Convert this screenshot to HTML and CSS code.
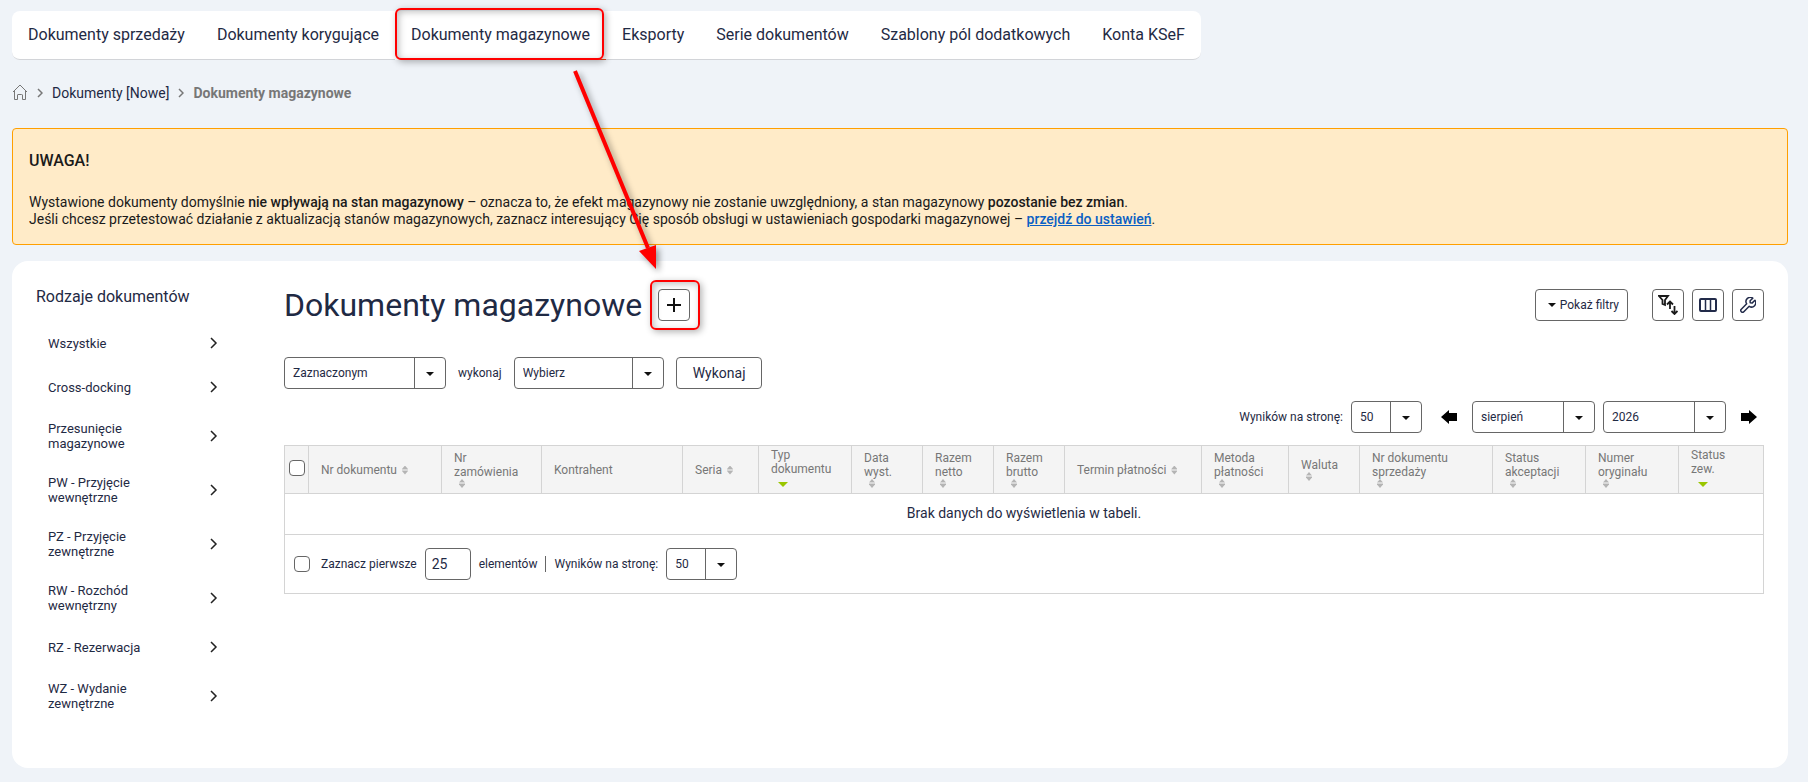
FILE: index.html
```html
<!DOCTYPE html>
<html lang="pl">

<head>
    <meta charset="utf-8">
    <meta name="viewport" content="width=device-width, initial-scale=1">
    <title>Dokumenty magazynowe</title>
    <link rel="stylesheet" href="styles.css">
</head>

<body>
    <nav class="tabs">
        <a href="#" class="tab">Dokumenty sprzedaży</a>
        <a href="#" class="tab">Dokumenty korygujące</a>
        <div class="tab-current">
            <a href="#" class="tab active">Dokumenty magazynowe</a>
            <svg class="pointer" width="100" height="210" viewBox="0 0 100 210">
                <path d="M10 2L83 179" stroke="#f00" stroke-width="4" fill="none" />
                <path d="M74 182L91 176L91 200Z" fill="#f00" />
            </svg>
        </div>
        <a href="#" class="tab">Eksporty</a>
        <a href="#" class="tab">Serie dokumentów</a>
        <a href="#" class="tab">Szablony pól dodatkowych</a>
        <a href="#" class="tab">Konta KSeF</a>
    </nav>

    <nav class="breadcrumb">
        <a href="#" class="home" aria-label="Strona główna">
            <svg width="16" height="18" viewBox="0 0 16 18">
                <path d="M1 8L8 1L15 8M2.5 7V15.5H5.5V11Q5.5 10.500 6 10.500H9.500Q10.500 10.500 10.500 11V15.500H13.500V7" />
            </svg>
        </a>
        <svg class="sep" width="6" height="10" viewBox="0 0 6 10"><path d="M1 1L5 5L1 9" /></svg>
        <a href="#">Dokumenty [Nowe]</a>
        <svg class="sep" width="6" height="10" viewBox="0 0 6 10"><path d="M1 1L5 5L1 9" /></svg>
        <span class="current">Dokumenty magazynowe</span>
    </nav>

    <div class="alert">
        <div class="alert-title">UWAGA!</div>
        <p>
            Wystawione dokumenty domyślnie <b>nie wpływają na stan magazynowy</b> – oznacza to, że efekt magazynowy nie zostanie uwzględniony, a stan magazynowy <b>pozostanie bez zmian</b>.<br>
            Jeśli chcesz przetestować działanie z aktualizacją stanów magazynowych, zaznacz interesujący Cię sposób obsługi w ustawieniach gospodarki magazynowej – <a href="#">przejdź do ustawień</a>.
        </p>
    </div>

    <div class="card">
        <aside class="sidebar">
            <div class="sidebar-title">Rodzaje dokumentów</div>
            <a href="#" class="type"><span>Wszystkie</span><svg width="8" height="12" viewBox="0 0 8 12"><path d="M1 1L6 6L1 11" /></svg></a>
            <a href="#" class="type"><span>Cross-docking</span><svg width="8" height="12" viewBox="0 0 8 12"><path d="M1 1L6 6L1 11" /></svg></a>
            <a href="#" class="type"><span>Przesunięcie magazynowe</span><svg width="8" height="12" viewBox="0 0 8 12"><path d="M1 1L6 6L1 11" /></svg></a>
            <a href="#" class="type"><span>PW - Przyjęcie wewnętrzne</span><svg width="8" height="12" viewBox="0 0 8 12"><path d="M1 1L6 6L1 11" /></svg></a>
            <a href="#" class="type"><span>PZ - Przyjęcie zewnętrzne</span><svg width="8" height="12" viewBox="0 0 8 12"><path d="M1 1L6 6L1 11" /></svg></a>
            <a href="#" class="type"><span>RW - Rozchód wewnętrzny</span><svg width="8" height="12" viewBox="0 0 8 12"><path d="M1 1L6 6L1 11" /></svg></a>
            <a href="#" class="type"><span>RZ - Rezerwacja</span><svg width="8" height="12" viewBox="0 0 8 12"><path d="M1 1L6 6L1 11" /></svg></a>
            <a href="#" class="type"><span>WZ - Wydanie zewnętrzne</span><svg width="8" height="12" viewBox="0 0 8 12"><path d="M1 1L6 6L1 11" /></svg></a>
        </aside>

        <main class="content">
            <div class="header">
                <h1>Dokumenty magazynowe</h1>
                <div class="marked">
                    <button type="button" class="btn icon" aria-label="Dodaj">
                        <svg width="14" height="14" viewBox="0 0 14 14"><path d="M7 0V14M0 7H14" stroke="#111" stroke-width="2" /></svg>
                    </button>
                </div>
                <div class="tools">
                    <button type="button" class="btn filter"><i class="caret"></i>Pokaż filtry</button>
                    <button type="button" class="btn icon" aria-label="Sortowanie">
                        <svg width="20" height="20" viewBox="0 0 20 20" fill="none" stroke="#1a1a1a">
                            <path d="M1 1H10L7 5V10L4.500 9V5Z" stroke-width="1.800" />
                            <path d="M12 14V7M9 9.500L12 6.500L15 9.500" stroke-width="1.800" />
                            <path d="M16.500 11V18.500M13.500 16L16.500 19L19.500 16" stroke-width="1.800" />
                        </svg>
                    </button>
                    <button type="button" class="btn icon" aria-label="Kolumny">
                        <svg width="18" height="14" viewBox="0 0 18 14" fill="none" stroke="#222b4a">
                            <rect x="1" y="1" width="16" height="12" rx="1" stroke-width="2" />
                            <path d="M6.500 1V13M11.500 1V13" stroke-width="1.500" />
                        </svg>
                    </button>
                    <button type="button" class="btn icon" aria-label="Ustawienia">
                        <svg width="16" height="16" viewBox="0 0 16 16" fill="none" stroke="#222b4a" stroke-width="1.500" stroke-linejoin="round">
                            <path d="M12.800 1.200A4.200 4.200 0 0 0 6.700 6.800L1.300 12.200A1.700 1.700 0 0 0 3.800 14.700L9.200 9.300A4.200 4.200 0 0 0 14.900 3.300L12.300 5.900L10.200 5.700L10.100 3.800Z" />
                        </svg>
                    </button>
                </div>
            </div>

            <div class="actions">
                <span class="select target"><select aria-label="Zakres"><option>Zaznaczonym</option></select></span>
                <label for="action">wykonaj</label>
                <span class="select action"><select id="action"><option>Wybierz</option></select></span>
                <button type="button" class="btn run">Wykonaj</button>
            </div>

            <div class="paging">
                <label for="per-page">Wyników na stronę:</label>
                <span class="select count"><select id="per-page"><option>50</option></select></span>
                <button type="button" class="step prev" aria-label="Poprzedni miesiąc">
                    <svg width="16" height="14" viewBox="0 0 16 14"><path d="M0 7L8 0V3H16V11H8V14Z" /></svg>
                </button>
                <span class="select period"><select aria-label="Miesiąc"><option>sierpień</option></select></span>
                <span class="select period"><select aria-label="Rok"><option>2026</option></select></span>
                <button type="button" class="step next" aria-label="Następny miesiąc">
                    <svg width="16" height="14" viewBox="0 0 16 14"><path d="M16 7L8 0V3H0V11H8V14Z" /></svg>
                </button>
            </div>

            <table class="list">
                <colgroup>
                    <col class="w-check">
                    <col class="w-number">
                    <col class="w-order">
                    <col>
                    <col class="w-series">
                    <col class="w-type">
                    <col class="w-small">
                    <col class="w-small">
                    <col class="w-small">
                    <col class="w-term">
                    <col class="w-method">
                    <col class="w-small">
                    <col class="w-number">
                    <col class="w-type">
                    <col class="w-type">
                    <col class="w-ext">
                </colgroup>
                <thead>
                    <tr>
                        <th class="check"><input type="checkbox" aria-label="Zaznacz wszystkie"></th>
                        <th>Nr dokumentu<i class="sort inline"></i></th>
                        <th>Nr zamówienia<i class="sort"></i></th>
                        <th>Kontrahent</th>
                        <th>Seria<i class="sort inline"></i></th>
                        <th>Typ dokumentu<i class="sorted"></i></th>
                        <th>Data wyst.<i class="sort"></i></th>
                        <th>Razem netto<i class="sort"></i></th>
                        <th>Razem brutto<i class="sort"></i></th>
                        <th>Termin płatności<i class="sort inline"></i></th>
                        <th>Metoda płatności<i class="sort"></i></th>
                        <th>Waluta<i class="sort"></i></th>
                        <th>Nr dokumentu sprzedaży<i class="sort"></i></th>
                        <th>Status akceptacji<i class="sort"></i></th>
                        <th>Numer oryginału<i class="sort"></i></th>
                        <th>Status<br>zew.<i class="sorted"></i></th>
                    </tr>
                </thead>
                <tbody>
                    <tr>
                        <td class="empty" colspan="16">Brak danych do wyświetlenia w tabeli.</td>
                    </tr>
                </tbody>
                <tfoot>
                    <tr>
                        <td colspan="16">
                            <div class="footer">
                                <input type="checkbox" id="first">
                                <label for="first" class="first">Zaznacz pierwsze</label>
                                <input type="text" class="amount" id="amount" value="25">
                                <label for="amount">elementów</label>
                                <span class="divider"></span>
                                <label for="per-page-bottom">Wyników na stronę:</label>
                                <span class="select count"><select id="per-page-bottom"><option>50</option></select></span>
                            </div>
                        </td>
                    </tr>
                </tfoot>
            </table>
        </main>
    </div>
</body>

</html>
```
FILE: styles.css
```css
* {
    box-sizing: border-box;
}

body {
    margin: 0;
    padding: 11px 20px 15px 12px;
    background: #eff3f8;
    color: #1f2a44;
    font-family: Roboto, sans-serif;
    font-size: 12px;
}

a {
    color: inherit;
    text-decoration: none;
}

button,
input,
select {
    font-family: inherit;
    color: inherit;
}

button {
    cursor: pointer;
}

/* top tabs */

.tabs {
    display: flex;
    width: fit-content;
    background: #fff;
    border-radius: 8px;
}

.tab {
    display: block;
    padding: 0 16px;
    font-size: 16px;
    line-height: 48px;
    border-bottom: 1px solid #d2d4d8;
}

.tab:first-child {
    border-bottom-left-radius: 8px;
}

.tab:last-child {
    border-bottom-right-radius: 8px;
}

.tab.active {
    border-bottom-color: #e8491d;
}

.tab-current {
    position: relative;
}

.tab-current::after,
.marked::after {
    content: "";
    position: absolute;
    border: 2px solid #f00;
    border-radius: 6px;
    box-shadow: 2px 2px 7px rgba(0, 0, 0, .3), inset 2px 2px 7px rgba(0, 0, 0, .25);
    pointer-events: none;
}

.tab-current::after {
    top: -3px;
    right: 2px;
    bottom: 0;
    left: 0;
}

.pointer {
    position: absolute;
    top: 58px;
    left: 170px;
    z-index: 2;
    overflow: visible;
    pointer-events: none;
    filter: drop-shadow(3px 3px 3px rgba(0, 0, 0, .4));
}

/* breadcrumb */

.breadcrumb {
    display: flex;
    align-items: center;
    height: 20px;
    margin: 23px 0 25px;
    font-size: 14px;
}

.breadcrumb svg {
    display: block;
    fill: none;
    stroke: #777;
}

.breadcrumb .sep {
    margin: 0 9px;
    stroke-width: 1.5;
}

.breadcrumb .current {
    color: #777;
    font-weight: bold;
}

.alert {
    padding: 22px 16px 16px;
    background: #ffebc8;
    border: 1px solid #ff9f00;
    border-radius: 4px;
    color: #1a1a1a;
    font-size: 14px;
    line-height: 17px;
}

.alert-title {
    font-size: 16px;
    font-weight: 500;
    line-height: 20px;
}

.alert p {
    margin: 23px 0 0;
}

.alert b,
.alert a {
    font-weight: 500;
}

.alert a {
    color: #0a5fc4;
    text-decoration: underline;
}

.card {
    display: flex;
    margin-top: 16px;
    padding: 24px 24px 45px;
    background: #fff;
    border-radius: 16px;
}

/* document types */

.sidebar {
    flex: none;
    width: 248px;
}

.sidebar-title {
    margin-bottom: 12px;
    font-size: 16px;
    line-height: 24px;
}

.type {
    display: flex;
    align-items: center;
    justify-content: space-between;
    gap: 40px;
    width: 182px;
    min-height: 44px;
    padding: 12px 0 12px 12px;
    font-size: 13px;
    line-height: 15px;
}

.type svg {
    flex: none;
    fill: none;
    stroke: #222;
    stroke-width: 1.5;
}

/* content */

.content {
    flex: 1;
    min-width: 0;
}

.header {
    display: flex;
    align-items: center;
    gap: 16px;
    height: 40px;
}

h1 {
    margin: 0;
    font-size: 32px;
    font-weight: normal;
}

.marked {
    position: relative;
}

.marked::after {
    top: -9px;
    right: -10px;
    bottom: -9px;
    left: -8px;
}

.btn {
    display: flex;
    align-items: center;
    justify-content: center;
    height: 32px;
    padding: 0;
    background: #fff;
    border: 1px solid #666;
    border-radius: 4px;
    font-size: 12px;
}

.btn.icon {
    width: 32px;
}

.tools {
    display: flex;
    gap: 8px;
    margin-left: auto;
}

.btn.filter {
    gap: 4px;
    margin-right: 16px;
    padding: 0 8px 0 12px;
}

.caret {
    border: 4px solid transparent;
    border-top-color: #111;
    border-bottom: 0;
}

.actions {
    display: flex;
    align-items: center;
    gap: 12px;
    margin-top: 32px;
}

.select {
    position: relative;
}

.select select {
    display: block;
    width: 100%;
    height: 32px;
    padding: 0 40px 0 8px;
    background: #fff;
    border: 1px solid #666;
    border-radius: 4px;
    font-size: 12px;
    appearance: none;
}

.select::before {
    content: "";
    position: absolute;
    top: 0;
    right: 31px;
    bottom: 0;
    border-left: 1px solid #666;
}

.select::after {
    content: "";
    position: absolute;
    top: 15px;
    right: 12px;
    border: 4px solid transparent;
    border-top-color: #111;
    border-bottom: 0;
    pointer-events: none;
}

.target {
    width: 162px;
}

.action {
    width: 150px;
}

.count {
    width: 71px;
}

.period {
    width: 123px;
}

.btn.run {
    padding: 0 16px;
    font-size: 14px;
}

.paging {
    display: flex;
    align-items: center;
    justify-content: flex-end;
    gap: 8px;
    margin: 12px 0;
}

.step {
    display: flex;
    padding: 8px 7px;
    background: none;
    border: 0;
}

.prev {
    margin-left: 4px;
}

/* documents table */

.list {
    width: 100%;
    border-collapse: collapse;
    table-layout: fixed;
}

.list th,
.list td {
    border: 1px solid #d4d4d4;
}

.list th {
    height: 48px;
    padding: 0 12px;
    background: #f4f4f4;
    color: #777;
    font-weight: normal;
    line-height: 14px;
    text-align: left;
}

.list th.check {
    padding: 0 4px 4px;
}

.w-check {
    width: 24px;
}

.w-number {
    width: 133px;
}

.w-order {
    width: 100px;
}

.w-series {
    width: 76px;
}

.w-type {
    width: 93px;
}

.w-small {
    width: 71px;
}

.w-term {
    width: 137px;
}

.w-method {
    width: 87px;
}

.w-ext {
    width: 85px;
}

.sort {
    display: block;
    width: 6px;
    height: 9px;
    margin-left: 5px;
    background: linear-gradient(#b4b4b4 0 3px, #d8d8d8 3px 5px, #b4b4b4 5px);
    clip-path: polygon(50% 0, 100% 40%, 100% 60%, 50% 100%, 0 60%, 0 40%);
}

.sort.inline {
    display: inline-block;
    vertical-align: -1px;
}

.sorted {
    display: block;
    height: 16px;
    padding: 6px 7px;
}

.sorted::before {
    content: "";
    display: block;
    width: 0;
    border: 5px solid transparent;
    border-top-color: #99c600;
    border-bottom: 0;
}

input[type="checkbox"] {
    display: block;
    width: 16px;
    height: 16px;
    margin: 0;
    background: #fff;
    border: 1px solid #666;
    border-radius: 4px;
    appearance: none;
}

.list .empty {
    height: 41px;
    padding: 0 0 2px;
    font-size: 14px;
    text-align: center;
}

.list tfoot td {
    height: 59px;
    padding: 0 9px;
}

.footer {
    display: flex;
    align-items: center;
    gap: 8px;
}

.first {
    margin-left: 3px;
}

.amount {
    width: 46px;
    height: 32px;
    padding: 0 6px;
    border: 1px solid #666;
    border-radius: 4px;
    font-size: 14px;
}

.divider {
    height: 16px;
    border-left: 1px solid #666;
}
```
